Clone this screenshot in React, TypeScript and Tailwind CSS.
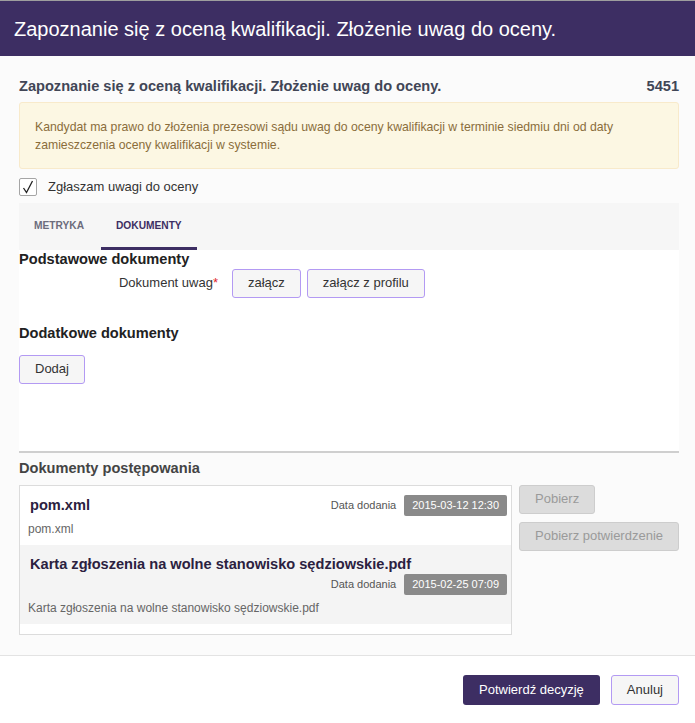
import type { FC, ReactNode } from "react";

const font = { fontFamily: '"Liberation Sans", Arial, sans-serif' };

interface IDocProps {
  title: string;
  date: string;
  shaded?: boolean;
}

const DocItem: FC<IDocProps> = ({ title, date, shaded }) => (
  <div className={shaded ? "bg-[#f4f4f4] pl-[10px] pr-[4px] pt-[9px] pb-[7px]" : "bg-white pl-[10px] pr-[4px] pt-[9px] pb-[7px]"}>
    <div className="flex flex-wrap items-center">
      <h4 className="text-[14.6px] leading-5 font-bold text-[#2b2140]">{title}</h4>
      <div className="ml-auto flex items-center gap-2">
        <span className="text-[11px] text-[#555]">Data dodania</span>
        <span className="h-[21px] px-2 flex items-center rounded-[2px] bg-[#8a8a8a] text-[11px] text-white">{date}</span>
      </div>
    </div>
    <p className="mt-[4px] -ml-[2px] text-[12px] leading-[18px] text-[#666]">{title}</p>
  </div>
);

const Btn: FC<{ children: ReactNode }> = ({ children }) => (
  <button className="h-[29px] px-[15px] rounded-[3px] border border-[#b39af3] bg-[#f6f6f6] text-[13px] text-[#333]">
    {children}
  </button>
);

export default function App() {
  return (
    <div className="w-[695px] h-[723px] flex flex-col bg-[#fbfbfb] overflow-hidden" style={font}>
      {/* header */}
      <div className="h-[56px] shrink-0 border-t border-[#9e9e9e] bg-[#3d2e63] flex items-center pl-[14px]">
        <h1 className="text-[20px] text-white">Zapoznanie się z oceną kwalifikacji. Złożenie uwag do oceny.</h1>
      </div>

      {/* body */}
      <div className="flex-1 pl-[19px] pr-[16px] pt-[20px]">
        <div className="flex justify-between text-[14.6px] leading-5 font-bold text-[#414656]">
          <span>Zapoznanie się z oceną kwalifikacji. Złożenie uwag do oceny.</span>
          <span>5451</span>
        </div>

        <div className="mt-[6px] h-[67px] rounded-[3px] border border-[#f8eacb] bg-[#fcf7e3] px-[15px] pt-[15px] text-[12.25px] leading-[18px] text-[#8a6d3b]">
          Kandydat ma prawo do złożenia prezesowi sądu uwag do oceny kwalifikacji w terminie siedmiu dni od daty zamieszczenia oceny kwalifikacji w systemie.
        </div>

        <label className="mt-2 flex items-center gap-[11px] text-[13px] text-[#333]">
          <span className="w-[18px] h-[18px] rounded-[2px] border border-[#a5a5a5] bg-white flex items-center justify-center">
            <svg width="14" height="14" viewBox="0 0 14 14">
              <polyline points="2.5,8 5.5,12.5 11.5,1" fill="none" stroke="#222" strokeWidth="1.3" />
            </svg>
          </span>
          Zgłaszam uwagi do oceny
        </label>

        {/* tabs */}
        <div className="mt-[6px] h-[47px] bg-[#f6f6f6] flex items-stretch">
          <div className="pl-[15px] pr-[17px] flex items-center text-[10.2px] font-bold text-[#6c6c7c]">METRYKA</div>
          <div className="px-[15px] flex items-center text-[10.2px] font-bold text-[#3d2e63] border-b-[3px] border-[#3d2e63] pt-[3px]">
            DOKUMENTY
          </div>
        </div>

        <div className="h-[203px] bg-white border-b-2 border-[#cfcfcf]">
          <h3 className="text-[14.6px] leading-[19px] font-bold text-[#222]">Podstawowe dokumenty</h3>
          <div className="flex items-center gap-[14px]">
            <span className="w-[199px] text-right text-[13px] text-[#333]">
              Dokument uwag<span className="text-[#e0262a]">*</span>
            </span>
            <div className="flex gap-[6px]">
              <Btn>załącz</Btn>
              <Btn>załącz z profilu</Btn>
            </div>
          </div>

          <h3 className="mt-[26px] text-[14.6px] leading-[18px] font-bold text-[#222]">Dodatkowe dokumenty</h3>
          <div className="mt-[13px]">
            <Btn>Dodaj</Btn>
          </div>
        </div>

        <h3 className="mt-[5px] text-[14.6px] leading-5 font-bold text-[#444]">Dokumenty postępowania</h3>

        <div className="mt-[7px] flex items-start gap-[7px]">
          <div className="w-[495px] h-[150px] border border-[#dcdcdc] bg-white">
            <DocItem title="pom.xml" date="2015-03-12 12:30" />
            <DocItem title="Karta zgłoszenia na wolne stanowisko sędziowskie.pdf" date="2015-02-25 07:09" shaded />
          </div>
          <div className="flex flex-col items-start gap-2">
            <button disabled className="h-[29px] px-[15px] rounded-[3px] border border-[#cdcdcd] bg-[#dcdcdc] text-[13px] text-[#9a9a9a] whitespace-nowrap">
              Pobierz
            </button>
            <button disabled className="h-[29px] px-[15px] rounded-[3px] border border-[#cdcdcd] bg-[#dcdcdc] text-[13px] text-[#9a9a9a] whitespace-nowrap">
              Pobierz potwierdzenie
            </button>
          </div>
        </div>
      </div>

      {/* footer */}
      <div className="h-[68px] shrink-0 border-t border-[#e3e3e3] bg-white flex items-start justify-end gap-[11px] pt-[19px] pr-[16px]">
        <button className="h-[30px] px-4 rounded-[3px] bg-[#3d2e63] text-[13px] text-white">Potwierdź decyzję</button>
        <button className="h-[30px] px-[15px] rounded-[3px] border border-[#b39af3] bg-[#f6f6f6] text-[13px] text-[#333]">Anuluj</button>
      </div>
    </div>
  );
}
